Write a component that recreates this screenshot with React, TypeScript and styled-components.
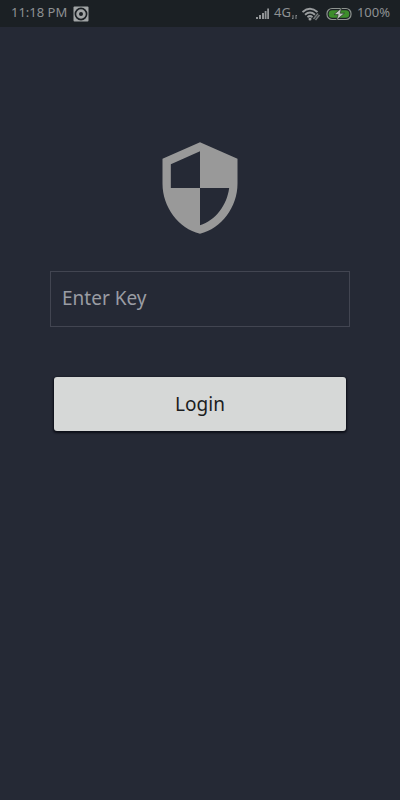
import React, { useState } from "react";
import styled, { createGlobalStyle } from "styled-components";

const GlobalStyle = createGlobalStyle`
  *, *::before, *::after { box-sizing: border-box; }
  body {
    margin: 0;
    background: #252935;
    font-family: "Noto Sans", "Open Sans", sans-serif;
  }
`;

const Screen = styled.div`
  min-height: 100vh;
  display: flex;
  flex-direction: column;
  background: #252935;
`;

const StatusBar = styled.header`
  display: flex;
  align-items: center;
  justify-content: space-between;
  height: 27px;
  padding: 0 10px 0 11px;
  background: #1b2024;
  color: #8e9193;
  font-size: 13px;
  line-height: 20px;
`;

const StatusGroup = styled.div<{ $gap: number }>`
  display: flex;
  align-items: center;
  gap: ${({ $gap }) => $gap}px;

  svg { display: block; flex: none; }
`;

const StatusText = styled.span`
  padding-bottom: 3px;
`;

const Network = styled.span`
  display: flex;
  align-items: center;
  gap: 1px;
`;

const LoginForm = styled.form`
  display: flex;
  flex-direction: column;
  align-items: center;
  padding: 111px 50px 0;
`;

const KeyInput = styled.input`
  width: 100%;
  height: 56px;
  margin-top: 33px;
  padding: 0 11px 2px;
  border: 1px solid #424551;
  border-radius: 0;
  outline: none;
  background: transparent;
  color: #a4a6ac;
  font: 400 19px/28px "Noto Sans", sans-serif;

  &::placeholder { color: #9a9ca3; opacity: 1; }
  &:focus { border-color: #777b88; }
`;

const ButtonRow = styled.div`
  width: 100%;
  margin-top: 50px;
  padding: 0 4px;
`;

const LoginButton = styled.button`
  display: block;
  width: 100%;
  height: 54px;
  padding: 0;
  border: 0;
  border-radius: 3px;
  background: #d6d8d7;
  box-shadow: 0 1px 2px 1px rgba(5, 7, 15, 0.75);
  color: #1b1d1e;
  font: 400 19px/28px "Noto Sans", sans-serif;
  cursor: pointer;
`;

const RecorderIcon = () => (
  <svg width="16" height="16" viewBox="0 0 16 16" aria-hidden="true">
    <rect x="0.5" y="0.5" width="15" height="15" rx="1" fill="#a2a5a6" />
    <circle cx="8" cy="8" r="5.6" fill="#a2a5a6" stroke="#1b2024" strokeWidth="1.7" />
    <circle cx="8" cy="8" r="2" fill="#1b2024" />
  </svg>
);

const SignalIcon = () => (
  <svg width="14" height="12" viewBox="0 0 14 12" fill="#929597" aria-hidden="true">
    <rect x="1" y="9" width="2" height="2" />
    <rect x="4" y="7" width="2" height="4" />
    <rect x="7" y="5" width="2" height="6" />
    <rect x="9.7" y="3" width="1.8" height="8" />
    <rect x="12.2" y="0.5" width="1.8" height="10.5" />
  </svg>
);

const DataIcon = () => (
  <svg width="5" height="14" viewBox="0 0 5 14" fill="none" stroke="#85888a" aria-hidden="true">
    <path d="M1 8v4M0 11l1 1M4 12V8M4 8l1 1" />
  </svg>
);

const WifiIcon = () => (
  <svg width="19" height="14" viewBox="0 0 19 14" fill="none" aria-hidden="true">
    <path d="M0.5 5Q8 -1.500 15.5 5M3 7.700Q8 3.300 13 7.700M5.500 10.200Q8 8 10.500 10.200" stroke="#999c9e" strokeWidth="1.9" />
    <circle cx="8" cy="12" r="1.5" fill="#999c9e" />
    <path d="M11.500 12l4.500-5.500M13.500 13l4-5" stroke="#74787a" strokeWidth="1.5" />
  </svg>
);

const BatteryIcon = () => (
  <svg width="26" height="14" viewBox="0 0 26 14" aria-hidden="true">
    <rect x="1" y="1.5" width="24" height="11" rx="5" fill="#1b2024" stroke="#8e9490" strokeWidth="1.2" />
    <rect x="2.7" y="3.2" width="20.6" height="7.600" rx="3.5" fill="#3d8d2c" />
    <path d="M15.500 1L8 7.600h4.200L10.500 13l8-6.800h-4.300z" fill="#c0c6c0" stroke="#263329" strokeWidth="0.7" />
  </svg>
);

const ShieldIcon = () => (
  <svg width="100" height="100" viewBox="0 0 24 24" fill="#999" aria-hidden="true">
    <path d="M12 1L3 5v6c0 5.550 3.840 10.740 9 12 5.160-1.260 9-6.450 9-12V5l-9-4zm0 10.990h7c-.53 4.120-3.280 7.790-7 8.940V12H5V6.300l7-3.110v8.800z" />
  </svg>
);

export default function App() {
  const [key, setKey] = useState("");

  return (
    <Screen>
      <GlobalStyle />
      <StatusBar>
        <StatusGroup $gap={6}>
          <StatusText>11:18 PM</StatusText>
          <RecorderIcon />
        </StatusGroup>
        <StatusGroup $gap={5}>
          <SignalIcon />
          <Network>
            <StatusText>4G</StatusText>
            <DataIcon />
          </Network>
          <WifiIcon />
          <BatteryIcon />
          <StatusText>100%</StatusText>
        </StatusGroup>
      </StatusBar>
      <main>
        <LoginForm onSubmit={(event) => event.preventDefault()}>
          <ShieldIcon />
          <KeyInput
            type="text"
            aria-label="Enter Key"
            placeholder="Enter Key"
            value={key}
            onChange={(event) => setKey(event.target.value)}
          />
          <ButtonRow>
            <LoginButton type="submit">Login</LoginButton>
          </ButtonRow>
        </LoginForm>
      </main>
    </Screen>
  );
}
